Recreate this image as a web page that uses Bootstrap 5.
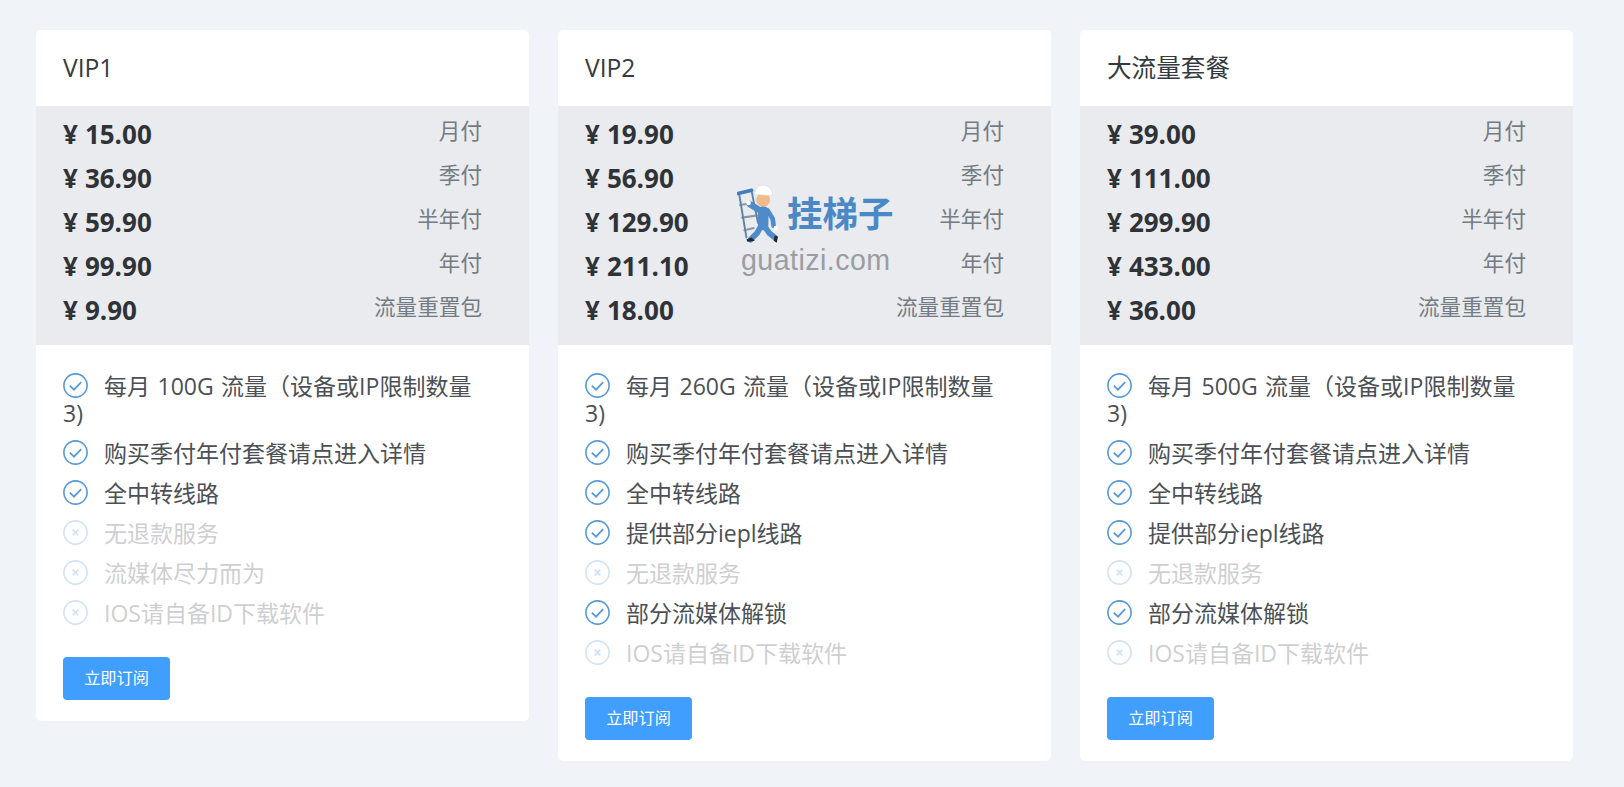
<!DOCTYPE html>
<html lang="zh-CN">
<head>
<meta charset="utf-8">
<title>套餐</title>
<link href="https://cdn.jsdelivr.net/npm/bootstrap@5.3.0/dist/css/bootstrap.min.css" rel="stylesheet">
<style>
html,body{height:100%;overflow:hidden}
body{background:#f0f3f8;font-family:"Open Sans","Noto Sans CJK SC",sans-serif;color:#343a40}
.plan-page{position:relative;padding:30px 51px 0 36px;gap:29px}
.plan-card{width:493px;flex:none;border-radius:5px;background:#fff;overflow:hidden}
.plan-head{height:76px;padding:0 27px;font-size:24.6px;line-height:76px;color:#343a40}
.plan-prices{background:#e9ebef;padding:7px 47px 12px 27px}
.price-row{height:44px}
.price-val{font-size:26px;font-weight:700;color:#2f3338;line-height:42px;white-space:nowrap}
.price-yen{margin-right:7px}
.price-label{font-size:21.6px;color:#757b82;line-height:36px}
.plan-body{padding:28px 47px 21px 27px}
.feat-list{margin:0 0 30px;padding:0;list-style:none;font-size:23px;line-height:27px;color:#4b5056;word-spacing:1.5px}
.feat-list li{margin-bottom:13px}
.feat-off{opacity:.27}
.feat-ico{width:27px;height:27px;vertical-align:1px;margin:-5px 15px -5px -1px;color:#5598da}
.plan-btn{background:#409eff;border:0;border-radius:4px;color:#fff;width:107px;height:43px;padding:0;font-size:16.2px;line-height:43px}
.plan-btn:hover{background:#409eff;color:#fff}
.site-mark{position:absolute;left:737px;top:184px;width:160px;height:96px}
.mark-name{position:absolute;left:50px;top:8px;font-size:35.5px;line-height:42px;font-weight:700;color:#4b88c6;white-space:nowrap}
.mark-url{position:absolute;left:4px;top:60px;font-family:"Liberation Sans",sans-serif;font-size:28.6px;line-height:32px;letter-spacing:.45px;color:#9a9da1;white-space:nowrap}
.mark-man{position:absolute;left:0;top:0;width:44px;height:63px}
</style>
</head>
<body>
<svg width="0" height="0" class="d-block position-absolute">
<symbol id="i-ok" viewBox="0 0 27 27"><circle cx="13.5" cy="13.5" r="11.6" fill="none" stroke="currentColor" stroke-width="1.6"/><path d="M7.8 13.7l4.2 4 7.2-7.6" fill="none" stroke="currentColor" stroke-width="1.7"/></symbol>
<symbol id="i-no" viewBox="0 0 27 27"><circle cx="13.5" cy="13.5" r="11.6" fill="none" stroke="currentColor" stroke-width="1.6"/><path d="M10.7 10.7l5.6 5.6M16.3 10.7l-5.6 5.6" fill="none" stroke="currentColor" stroke-width="1.7"/></symbol>
</svg>
<div class="plan-page d-flex align-items-start">

<div class="plan-card">
<div class="plan-head">VIP1</div>
<div class="plan-prices">
<div class="price-row d-flex justify-content-between"><span class="price-val"><span class="price-yen">¥</span>15.00</span><span class="price-label">月付</span></div>
<div class="price-row d-flex justify-content-between"><span class="price-val"><span class="price-yen">¥</span>36.90</span><span class="price-label">季付</span></div>
<div class="price-row d-flex justify-content-between"><span class="price-val"><span class="price-yen">¥</span>59.90</span><span class="price-label">半年付</span></div>
<div class="price-row d-flex justify-content-between"><span class="price-val"><span class="price-yen">¥</span>99.90</span><span class="price-label">年付</span></div>
<div class="price-row d-flex justify-content-between"><span class="price-val"><span class="price-yen">¥</span>9.90</span><span class="price-label">流量重置包</span></div>
</div>
<div class="plan-body">
<ul class="feat-list">
<li><svg class="feat-ico"><use href="#i-ok"/></svg>每月 100G 流量（设备或IP限制数量3)</li>
<li><svg class="feat-ico"><use href="#i-ok"/></svg>购买季付年付套餐请点进入详情</li>
<li><svg class="feat-ico"><use href="#i-ok"/></svg>全中转线路</li>
<li class="feat-off"><svg class="feat-ico"><use href="#i-no"/></svg>无退款服务</li>
<li class="feat-off"><svg class="feat-ico"><use href="#i-no"/></svg>流媒体尽力而为</li>
<li class="feat-off"><svg class="feat-ico"><use href="#i-no"/></svg>IOS请自备ID下载软件</li>
</ul>
<a href="#" class="btn plan-btn">立即订阅</a>
</div>
</div>

<div class="plan-card">
<div class="plan-head">VIP2</div>
<div class="plan-prices">
<div class="price-row d-flex justify-content-between"><span class="price-val"><span class="price-yen">¥</span>19.90</span><span class="price-label">月付</span></div>
<div class="price-row d-flex justify-content-between"><span class="price-val"><span class="price-yen">¥</span>56.90</span><span class="price-label">季付</span></div>
<div class="price-row d-flex justify-content-between"><span class="price-val"><span class="price-yen">¥</span>129.90</span><span class="price-label">半年付</span></div>
<div class="price-row d-flex justify-content-between"><span class="price-val"><span class="price-yen">¥</span>211.10</span><span class="price-label">年付</span></div>
<div class="price-row d-flex justify-content-between"><span class="price-val"><span class="price-yen">¥</span>18.00</span><span class="price-label">流量重置包</span></div>
</div>
<div class="plan-body">
<ul class="feat-list">
<li><svg class="feat-ico"><use href="#i-ok"/></svg>每月 260G 流量（设备或IP限制数量3)</li>
<li><svg class="feat-ico"><use href="#i-ok"/></svg>购买季付年付套餐请点进入详情</li>
<li><svg class="feat-ico"><use href="#i-ok"/></svg>全中转线路</li>
<li><svg class="feat-ico"><use href="#i-ok"/></svg>提供部分iepl线路</li>
<li class="feat-off"><svg class="feat-ico"><use href="#i-no"/></svg>无退款服务</li>
<li><svg class="feat-ico"><use href="#i-ok"/></svg>部分流媒体解锁</li>
<li class="feat-off"><svg class="feat-ico"><use href="#i-no"/></svg>IOS请自备ID下载软件</li>
</ul>
<a href="#" class="btn plan-btn">立即订阅</a>
</div>
</div>

<div class="plan-card">
<div class="plan-head">大流量套餐</div>
<div class="plan-prices">
<div class="price-row d-flex justify-content-between"><span class="price-val"><span class="price-yen">¥</span>39.00</span><span class="price-label">月付</span></div>
<div class="price-row d-flex justify-content-between"><span class="price-val"><span class="price-yen">¥</span>111.00</span><span class="price-label">季付</span></div>
<div class="price-row d-flex justify-content-between"><span class="price-val"><span class="price-yen">¥</span>299.90</span><span class="price-label">半年付</span></div>
<div class="price-row d-flex justify-content-between"><span class="price-val"><span class="price-yen">¥</span>433.00</span><span class="price-label">年付</span></div>
<div class="price-row d-flex justify-content-between"><span class="price-val"><span class="price-yen">¥</span>36.00</span><span class="price-label">流量重置包</span></div>
</div>
<div class="plan-body">
<ul class="feat-list">
<li><svg class="feat-ico"><use href="#i-ok"/></svg>每月 500G 流量（设备或IP限制数量3)</li>
<li><svg class="feat-ico"><use href="#i-ok"/></svg>购买季付年付套餐请点进入详情</li>
<li><svg class="feat-ico"><use href="#i-ok"/></svg>全中转线路</li>
<li><svg class="feat-ico"><use href="#i-ok"/></svg>提供部分iepl线路</li>
<li class="feat-off"><svg class="feat-ico"><use href="#i-no"/></svg>无退款服务</li>
<li><svg class="feat-ico"><use href="#i-ok"/></svg>部分流媒体解锁</li>
<li class="feat-off"><svg class="feat-ico"><use href="#i-no"/></svg>IOS请自备ID下载软件</li>
</ul>
<a href="#" class="btn plan-btn">立即订阅</a>
</div>
</div>

<div class="site-mark">
<svg class="mark-man" viewBox="0 0 42 60">
<g fill="none" stroke-linecap="round">
<path d="M3 20l12-2M5 32l14-2M7 44l9-2" stroke="#8d97a1" stroke-width="2"/>
<path d="M2 9l7 42M14 7l6 30" stroke="#5d83a8" stroke-width="1.8"/>
<path d="M1 9l13-3" stroke="#3f7fc0" stroke-width="3.4"/>
<path d="M12 19l8 5" stroke="#4f8bc9" stroke-width="6"/>
<path d="M29 25l5 8 1 7" stroke="#4f8bc9" stroke-width="4.5"/>
<path d="M25 26v13" stroke="#4f8bc9" stroke-width="10"/>
<path d="M23 40l-4 7-6 6" stroke="#4f8bc9" stroke-width="5.5"/>
<path d="M26 40l5 7 5 4" stroke="#4f8bc9" stroke-width="5.5"/>
</g>
<circle cx="25" cy="15" r="6.6" fill="#f2b98c"/>
<path d="M17 10c0-6 4-9 8-9s9 3 9 10l-17-1z" fill="#fff" stroke="#d3d7dc" stroke-width=".6"/>
<path d="M9 53l5-2 3 3-7 1zM36 49l3 1-1 6-3-2z" fill="#23262b"/>
<circle cx="37" cy="42" r="2.2" fill="#fff"/>
<circle cx="11" cy="18" r="2.2" fill="#fff"/>
</svg>
<div class="mark-name">挂梯子</div>
<div class="mark-url">guatizi.com</div>
</div>

</div>
</body>
</html>
